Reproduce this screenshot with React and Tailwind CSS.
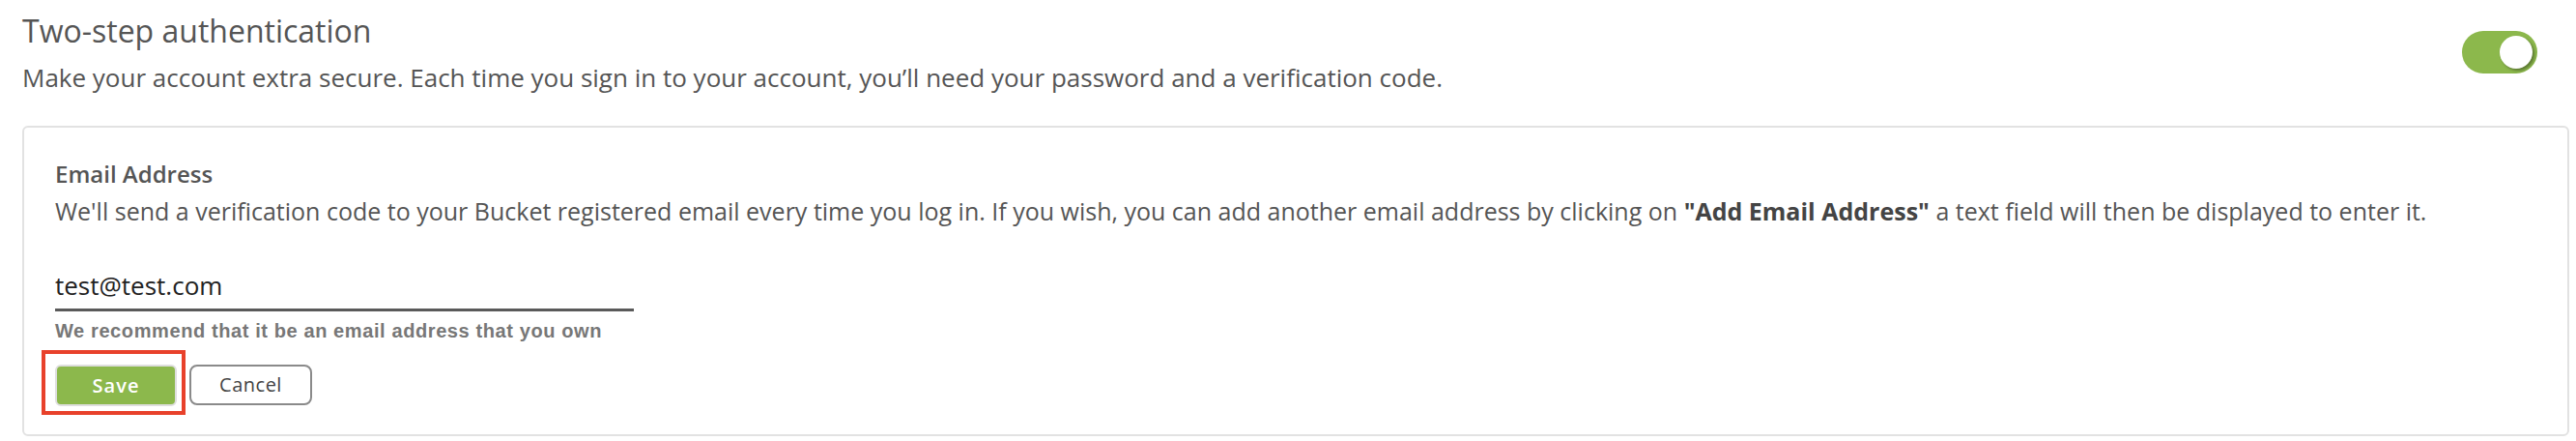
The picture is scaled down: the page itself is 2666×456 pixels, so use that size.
import { useState } from 'react';

const TwoStepAuth = () => {
    const [enabled, setEnabled] = useState(true);
    const [email, setEmail] = useState('test@test.com');

    return (
        <div className="bg-white min-h-[456px] font-['Open_Sans',sans-serif] text-[#555]">
            {/* Header */}
            <div className="flex justify-between pl-[23px] pr-[40px]">
                <div>
                    <h1 className="mt-[12px] text-[32px] leading-[40px] font-medium text-[#555]">Two-step authentication</h1>
                    <p className="mt-[11px] text-[26px] leading-[34px] text-[#555]">
                        Make your account extra secure. Each time you sign in to your account, you’ll need your password and a verification code.
                    </p>
                </div>
                <button
                    onClick={() => setEnabled(!enabled)}
                    className={`mt-[32px] w-[78px] h-[44px] rounded-full flex items-center px-[5px] ${enabled ? 'bg-[#8cb84c] justify-end' : 'bg-gray-300 justify-start'}`}
                >
                    <span className="block w-[34px] h-[34px] rounded-full bg-white shadow-[2px_2px_3px_rgba(0,0,0,0.35)]" />
                </button>
            </div>

            {/* Email card */}
            <div className="ml-[23px] mr-[7px] mt-[33px] border-2 border-[#e2e2e2] rounded-md pl-[32px] pr-8 pt-[31px] pb-[29px]">
                <h2 className="text-[24px] leading-[34px] font-semibold text-[#555]">Email Address</h2>
                <p className="mt-[3px] text-[25px] leading-[36px] text-[#555]">
                    We'll send a verification code to your Bucket registered email every time you log in. If you wish, you can add another email address by clicking on <span className="font-bold text-[#444]">"Add Email Address"</span> a text field will then be displayed to enter it.
                </p>

                <input
                    type="text"
                    value={email}
                    onChange={(e) => setEmail(e.target.value)}
                    className="mt-[41px] block w-[599px] pb-[6px] text-[26px] leading-[36px] text-[#222] border-b-[3px] border-[#5a5a5a] outline-none"
                />
                <p className="mt-[7px] font-['Liberation_Sans',Arial,sans-serif] font-bold text-[20px] leading-[26px] tracking-[0.6px] text-[#777]">
                    We recommend that it be an email address that you own
                </p>

                <div className="mt-[22px] flex gap-[13px]">
                    <div className="relative">
                        <div className="absolute -left-[14px] -right-[9px] -top-[15px] -bottom-[9px] border-4 border-[#e8412b] pointer-events-none" />
                        <button className="w-[126px] h-[43px] rounded-md bg-[#8cb84c] border-2 border-[#dedede] text-white text-[20px] font-semibold tracking-[1px]">
                            Save
                        </button>
                    </div>
                    <button className="w-[127px] h-[42px] rounded-lg bg-white border-2 border-[#8a8a8a] text-[#444] text-[20px] tracking-[0.5px]">
                        Cancel
                    </button>
                </div>
            </div>
        </div>
    );
};

export default TwoStepAuth;
